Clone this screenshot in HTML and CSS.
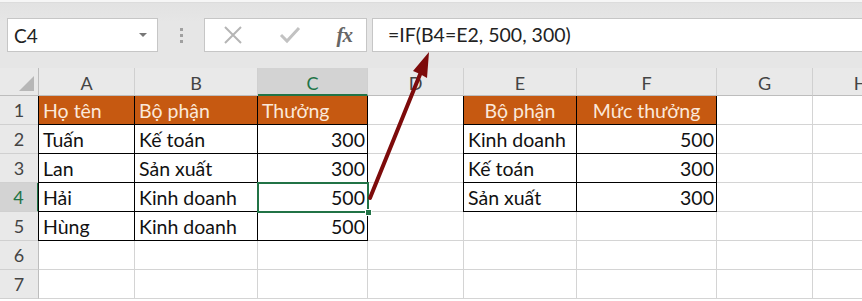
FILE: index.html
```html
<!DOCTYPE html>
<html lang="vi">
<head>
    <meta charset="UTF-8">
    <title>Hàm IF</title>
    <link rel="stylesheet" href="styles.css">
</head>
<body>

<div class="edge"></div>
<div class="fbar">
    <div class="namebox">
        <span>C4</span>
        <i class="drop"></i>
    </div>
    <div class="grip">
        <b></b><b></b><b></b>
    </div>
    <div class="btns">
        <svg width="22" height="22" viewBox="0 0 22 22"><path d="M3 3L19 19M19 3L3 19" stroke="#b5b5b5" stroke-width="2" fill="none"/></svg>
        <svg width="24" height="22" viewBox="0 0 24 22"><path d="M3 11L9 17L21 4" stroke="#c2c2c2" stroke-width="3" fill="none"/></svg>
        <span class="fx">fx</span>
    </div>
    <div class="formula">=IF(B4=E2, 500, 300)</div>
</div>

<div class="sheet">
    <!-- tiêu đề cột -->
    <div class="ch corner"><i></i></div>
    <div class="ch">A</div>
    <div class="ch">B</div>
    <div class="ch cur">C</div>
    <div class="ch">D</div>
    <div class="ch">E</div>
    <div class="ch">F</div>
    <div class="ch">G</div>
    <div class="ch">H</div>

    <!-- dòng 1 -->
    <div class="rh">1</div>
    <div class="c hd lb">Họ tên</div>
    <div class="c hd">Bộ phận</div>
    <div class="c hd">Thưởng</div>
    <div class="c"></div>
    <div class="c hd lb mid">Bộ phận</div>
    <div class="c hd mid">Mức thưởng</div>
    <div class="c"></div>
    <div class="c"></div>

    <!-- dòng 2 -->
    <div class="rh">2</div>
    <div class="c t lb">Tuấn</div>
    <div class="c t">Kế toán</div>
    <div class="c t num">300</div>
    <div class="c"></div>
    <div class="c t lb">Kinh doanh</div>
    <div class="c t num">500</div>
    <div class="c"></div>
    <div class="c"></div>

    <!-- dòng 3 -->
    <div class="rh">3</div>
    <div class="c t lb">Lan</div>
    <div class="c t">Sản xuất</div>
    <div class="c t num">300</div>
    <div class="c"></div>
    <div class="c t lb">Kế toán</div>
    <div class="c t num">300</div>
    <div class="c"></div>
    <div class="c"></div>

    <!-- dòng 4 -->
    <div class="rh cur">4</div>
    <div class="c t lb">Hải</div>
    <div class="c t">Kinh doanh</div>
    <div class="c t num sel">500<i class="handle"></i></div>
    <div class="c"></div>
    <div class="c t lb">Sản xuất</div>
    <div class="c t num">300</div>
    <div class="c"></div>
    <div class="c"></div>

    <!-- dòng 5 -->
    <div class="rh">5</div>
    <div class="c t lb">Hùng</div>
    <div class="c t">Kinh doanh</div>
    <div class="c t num">500</div>
    <div class="c"></div>
    <div class="c"></div>
    <div class="c"></div>
    <div class="c"></div>
    <div class="c"></div>

    <!-- dòng 6 -->
    <div class="rh">6</div>
    <div class="c"></div>
    <div class="c"></div>
    <div class="c"></div>
    <div class="c"></div>
    <div class="c"></div>
    <div class="c"></div>
    <div class="c"></div>
    <div class="c"></div>

    <!-- dòng 7 -->
    <div class="rh">7</div>
    <div class="c"></div>
    <div class="c"></div>
    <div class="c"></div>
    <div class="c"></div>
    <div class="c"></div>
    <div class="c"></div>
    <div class="c"></div>
    <div class="c"></div>
</div>

<!-- mũi tên chỉ vào thanh công thức -->
<svg class="arrow" width="862" height="301" viewBox="0 0 862 301">
    <line x1="370" y1="198" x2="421" y2="72" stroke="#7d0b0b" stroke-width="4" stroke-linecap="round"/>
    <polygon points="429,52 427,78 420,74 413,71" fill="#7d0b0b"/>
</svg>

</body>
</html>
```

FILE: styles.css
```css
*{
    margin: 0;
    padding: 0;
    box-sizing: border-box;
}
body{
    width: 862px;
    height: 301px;
    overflow: hidden;
    background: #fff;
    font-family: Lato, "Open Sans", sans-serif;
    position: relative;
}
.edge{
    height: 3px;
    background: #f6f6f6;
    border-bottom: 1px solid #dcdcdc;
}
.fbar{
    height: 65px;
    background: linear-gradient(#e2e2e2, #e6e6e6 30%);
    display: flex;
    align-items: flex-start;
    padding-top: 15px;
}
.namebox{
    margin-left: 7px;
    width: 151px;
    height: 34px;
    background: #fff;
    border: 1px solid #c6c6c6;
    display: flex;
    align-items: center;
    justify-content: space-between;
    padding: 0 10px 0 6px;
    font-size: 19px;
    color: #222;
}
.drop{
    width: 0;
    height: 0;
    border-left: 4px solid transparent;
    border-right: 4px solid transparent;
    border-top: 4px solid #777;
}
.grip{
    width: 46px;
    height: 34px;
    display: flex;
    flex-direction: column;
    align-items: center;
    justify-content: center;
    gap: 3px;
}
.grip b{
    width: 3px;
    height: 3px;
    background: #a0a0a0;
}
.btns{
    width: 163px;
    height: 34px;
    background: #fff;
    border: 1px solid #c6c6c6;
    display: flex;
    align-items: center;
    justify-content: space-between;
    padding: 0 14px 0 17px;
}
.fx{
    font-family: "Liberation Serif", serif;
    font-style: italic;
    font-weight: bold;
    font-size: 21px;
    color: #666;
    letter-spacing: -1px;
}
.formula{
    margin-left: 5px;
    flex: 1;
    height: 34px;
    background: #fff;
    border: 1px solid #c6c6c6;
    border-right: 0;
    padding-left: 15px;
    font-size: 19.5px;
    line-height: 32px;
    color: #222;
}

.sheet{
    display: grid;
    grid-template-columns: 39px 96px 123px 110px 96px 113px 140px 96px 96px;
    grid-template-rows: 28px repeat(7, 29px);
}
.ch{
    background: #e9e9e9;
    border-bottom: 1px solid #bdbdbd;
    border-right: 1px solid #d0d0d0;
    text-align: center;
    font-size: 18px;
    line-height: 30px;
    color: #444;
}
.ch.cur{
    background: #d3d3d3;
    color: #217346;
    border-bottom: 2px solid #217346;
}
.corner{
    position: relative;
    border-right-color: #bdbdbd;
}
.corner i{
    position: absolute;
    right: 4px;
    bottom: 4px;
    width: 0;
    height: 0;
    border-left: 15px solid transparent;
    border-bottom: 15px solid #b7b7b7;
}
.rh{
    background: #e9e9e9;
    border-right: 1px solid #bdbdbd;
    border-bottom: 1px solid #d0d0d0;
    text-align: center;
    font-size: 18px;
    line-height: 29px;
    color: #444;
}
.rh.cur{
    background: #d3d3d3;
    color: #217346;
    border-right: 2px solid #217346;
}
.c{
    border-right: 1px solid #d4d4d4;
    border-bottom: 1px solid #d4d4d4;
    font-size: 19.5px;
    padding: 2px 4px 0;
    line-height: 26px;
    white-space: nowrap;
    color: #111;
}
.c.t{
    border-right-color: #000;
    border-bottom-color: #000;
}
.c.lb{
    box-shadow: -1px 0 0 #000;
}
.c.hd{
    background: #c65911;
    color: #fbe8da;
    border-right-color: #000;
    border-bottom-color: #000;
}
.mid{
    text-align: center;
}
.num{
    text-align: right;
    padding-right: 2px;
}
.sel{
    position: relative;
    outline: 2px solid #217346;
    outline-offset: -1px;
    z-index: 1;
}
.handle{
    position: absolute;
    right: -5px;
    bottom: -5px;
    width: 7px;
    height: 7px;
    background: #217346;
    border: 1px solid #fff;
}
.arrow{
    position: absolute;
    left: 0;
    top: 0;
    pointer-events: none;
    z-index: 5;
}
```
